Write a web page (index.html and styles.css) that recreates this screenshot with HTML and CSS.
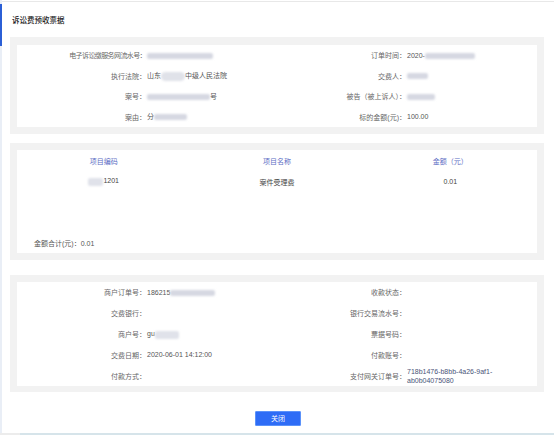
FILE: index.html
```html
<!DOCTYPE html>
<html lang="zh-CN">
<head>
<meta charset="utf-8">
<title>诉讼费预收票据</title>
<link rel="stylesheet" href="styles.css">
</head>
<body>
<div class="page">
  <span class="accent"></span>
  <div class="head"><h1 class="title">诉讼费预收票据</h1></div>
  <div class="content">
    <section class="box">
      <div class="inner fields fields-a">
        <div class="field"><span class="label tight">电子诉讼缴服务网流水号：</span><span class="value"><i class="blur" style="width:66px"></i></span></div>
        <div class="field"><span class="label">订单时间：</span><span class="value">2020-<i class="blur" style="width:50px"></i></span></div>
        <div class="field"><span class="label">执行法院：</span><span class="value">山东<i class="blur round" style="width:24px"></i>中级人民法院</span></div>
        <div class="field"><span class="label">交费人：</span><span class="value"><i class="blur" style="width:21px"></i></span></div>
        <div class="field"><span class="label">案号：</span><span class="value"><i class="blur" style="width:63px"></i>号</span></div>
        <div class="field"><span class="label">被告（被上诉人）：</span><span class="value"><i class="blur" style="width:28px"></i></span></div>
        <div class="field"><span class="label">案由：</span><span class="value">分<i class="blur" style="width:33px"></i></span></div>
        <div class="field"><span class="label">标的金额(元)：</span><span class="value">100.00</span></div>
      </div>
    </section>

    <section class="box box-table">
      <div class="inner table">
        <div class="trow thead"><span>项目编码</span><span>项目名称</span><span>金额（元）</span></div>
        <div class="trow tbody"><span><i class="blur light" style="width:15px"></i>1201</span><span>案件受理费</span><span>0.01</span></div>
        <div class="total">金额合计(元)：0.01</div>
      </div>
    </section>

    <section class="box box-pay">
      <div class="inner fields fields-b">
        <div class="field"><span class="label">商户订单号：</span><span class="value">186215<i class="blur" style="width:45px"></i></span></div>
        <div class="field"><span class="label">收款状态：</span><span class="value"></span></div>
        <div class="field"><span class="label">交费银行：</span><span class="value"></span></div>
        <div class="field"><span class="label">银行交易流水号：</span><span class="value"></span></div>
        <div class="field"><span class="label">商户号：</span><span class="value">gu<i class="blur light" style="width:24px"></i></span></div>
        <div class="field"><span class="label">票据号码：</span><span class="value"></span></div>
        <div class="field"><span class="label">交费日期：</span><span class="value">2020-06-01 14:12:00</span></div>
        <div class="field"><span class="label">付款账号：</span><span class="value"></span></div>
        <div class="field"><span class="label">付款方式：</span><span class="value"></span></div>
        <div class="field"><span class="label">支付网关订单号：</span><span class="value id">718b1476-b8bb-4a26-9af1-ab0b04075080</span></div>
      </div>
    </section>

    <div class="actions"><button class="btn" type="button">关闭</button></div>
  </div>
</div>
<div class="strip"></div>
</body>
</html>
```

FILE: styles.css
```css
* { box-sizing: border-box; margin: 0; padding: 0; }

html, body {
  width: 554px;
  height: 435px;
  overflow: hidden;
  background: #fff;
}

body {
  font-family: "Liberation Sans", "Noto Sans CJK SC", sans-serif;
  font-size: 7px;
  color: #555;
}

.page {
  position: relative;
  height: 433px;
  border-left: 2px solid #e9eef6;
  padding-top: 1px;
}

.accent {
  position: absolute;
  left: -2px;
  top: 4px;
  width: 2px;
  height: 42px;
  background: #2b5fd6;
}

.head {
  height: 36px;
  border-top: 1px solid #e8e8e8;
  display: flex;
  align-items: center;
  padding-left: 10px;
}

.title {
  font-size: 7.5px;
  font-weight: 500;
  color: #222;
}

.content {
  padding: 0 10px 0 8px;
}

.box {
  background: #f2f2f2;
  padding: 8px 7px 7px;
}

.inner {
  background: #fff;
}

.fields {
  display: grid;
  grid-template-columns: 1fr 1fr;
}

.field {
  display: flex;
  align-items: center;
  min-height: 20.5px;
}

.label {
  flex: 0 0 129px;
  text-align: right;
  color: #666;
  white-space: nowrap;
}

.label.tight {
  letter-spacing: -0.6px;
}

.value {
  flex: 1;
  padding-left: 1px;
  color: #555;
  line-height: 9px;
}

.value.id {
  color: #4a5478;
  padding-right: 4px;
}

.blur {
  display: inline-block;
  height: 6px;
  vertical-align: middle;
  background: #d6d8e2;
  filter: blur(1.1px);
  border-radius: 2px;
}

.blur.round {
  height: 9px;
  border-radius: 5px;
  background: #e0e2e9;
}

.blur.light {
  height: 8px;
  background: #e0e2ea;
}

.box-table {
  margin-top: 9px;
  padding: 7px;
}

.table {
  height: 103px;
  display: flex;
  flex-direction: column;
}

.trow {
  display: grid;
  grid-template-columns: 1fr 1fr 1fr;
  height: 21px;
  align-items: center;
  text-align: center;
}

.thead { color: #5b6cc4; }
.tbody { color: #444; }

.total {
  margin-top: auto;
  height: 21px;
  display: flex;
  align-items: center;
  padding-left: 17px;
  color: #555;
}

.box-pay {
  margin-top: 15px;
  padding: 7px 7px 6px;
}

.fields-b .field { min-height: 20.8px; }

.actions {
  display: flex;
  justify-content: center;
  margin-top: 19px;
}

.btn {
  width: 46px;
  height: 15px;
  background: #2e6cf6;
  border: 1px solid #5b92fa;
  border-radius: 1px;
  color: #fff;
  font-family: "Liberation Sans", "Noto Sans CJK SC", sans-serif;
  font-size: 7px;
  margin-left: 2px;
}

.strip {
  height: 2px;
  background: linear-gradient(to right, #ececec 20px, #d6e4ea 20px);
}
```
